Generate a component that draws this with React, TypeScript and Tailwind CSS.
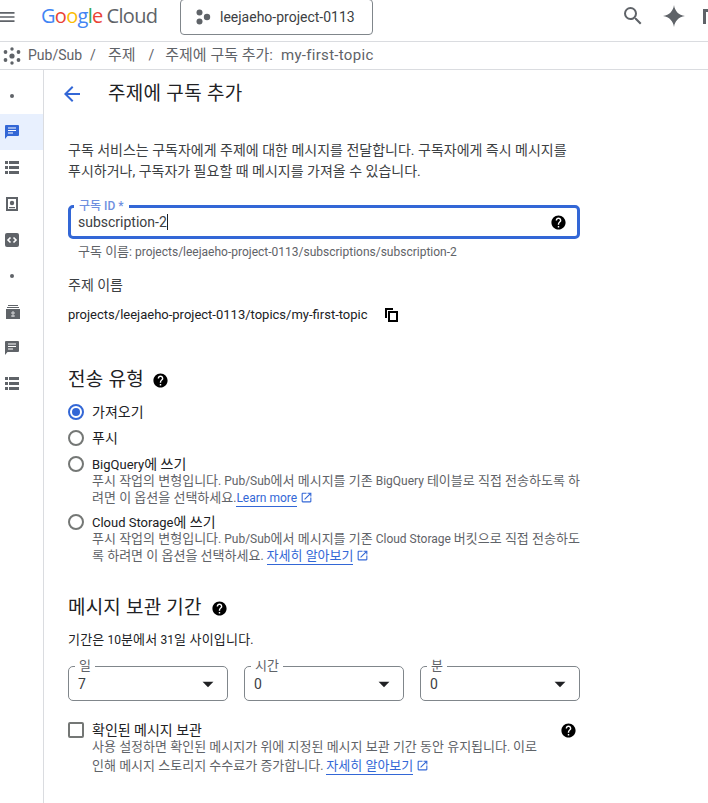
import React from 'react'
import { MdArrowBack, MdArrowDropDown, MdHelp, MdMenu, MdOpenInNew, MdSearch } from 'react-icons/md'

const FONT = "font-['Roboto','Noto_Sans_CJK_KR',sans-serif]"

// hangul runs are set a bit larger than the latin around them
const Ko = ({ text, className }: { text: string; className: string }) => (
  <>
    {text.split(/([가-힣]+(?:\s+[가-힣]+)*)/).map((part, i) =>
      /[가-힣]/.test(part) ? <span key={i} className={className}>{part}</span> : part
    )}
  </>
)

const KO_BODY = 'text-[14px]'
const KO_SMALL = 'text-[13px]'

const PubSubIcon = () => (
  <svg width="20" height="20" viewBox="0 0 20 20" className="text-[#5f6368]" fill="currentColor">
    <circle cx="10" cy="10" r="2.6" />
    <circle cx="10" cy="3" r="1.7" />
    <circle cx="10" cy="17" r="1.7" />
    <circle cx="3.5" cy="6" r="1.9" />
    <circle cx="16.5" cy="6" r="1.9" />
    <circle cx="3.5" cy="14" r="1.9" />
    <circle cx="16.5" cy="14" r="1.9" />
  </svg>
)

const ProjectIcon = () => (
  <svg width="16" height="20" viewBox="0 0 16 20" fill="#5f6368">
    <circle cx="4.5" cy="5.5" r="3" />
    <circle cx="4.5" cy="14.5" r="3" />
    <circle cx="12" cy="10" r="3.2" />
  </svg>
)

const SparkIcon = () => (
  <svg width="24" height="24" viewBox="0 0 24 24" fill="#5f6368">
    <path d="M12 1c.8 6 4.500 10 11 11-6.500 1-10.200 5-11 11-.8-6-4.500-10-11-11 6.500-1 10.200-5 11-11z" />
  </svg>
)

const CopyIcon = () => (
  <svg width="13" height="14" viewBox="0 0 13 14" fill="none" stroke="#000" strokeWidth="2" className="ml-[17px]">
    <path d="M1 10V1h7" />
    <rect x="4" y="4" width="8" height="9" />
  </svg>
)

const ChatIcon = ({ active }: { active?: boolean }) => (
  <svg width="14" height="14" viewBox="0 0 14 14">
    <path d="M1 0h12a1 1 0 0 1 1 1v9a1 1 0 0 1-1 1H2.500L0 14V1a1 1 0 0 1 1-1z" fill={active ? '#3367d6' : '#5f6368'} />
    <path d="M3 3h8M3 5.500h8M3 8h5" stroke="#fff" strokeWidth="1" />
  </svg>
)

const ListIcon = () => (
  <svg width="14" height="14" viewBox="0 0 14 14" fill="#5f6368">
    <rect x="0" y="0" width="3" height="3" />
    <rect x="4" y="0" width="10" height="3" />
    <rect x="0" y="5" width="3" height="3" />
    <rect x="4" y="5" width="10" height="3" />
    <rect x="0" y="10" width="3" height="3" />
    <rect x="4" y="10" width="10" height="3" />
  </svg>
)

const DocIcon = () => (
  <svg width="14" height="14" viewBox="0 0 14 14">
    <rect x="1" y="0" width="12" height="14" fill="#5f6368" />
    <rect x="3" y="2" width="8" height="10" fill="#fff" />
    <circle cx="7" cy="6" r="2.200" fill="#5f6368" />
    <rect x="4" y="10" width="6" height="1.200" fill="#5f6368" />
  </svg>
)

const CodeIcon = () => (
  <svg width="14" height="14" viewBox="0 0 14 14">
    <rect x="0" y="0" width="14" height="14" rx="2" fill="#5f6368" />
    <path d="M5.500 4.500 3 7l2.500 2.500M8.500 4.500 11 7 8.500 9.500" stroke="#fff" strokeWidth="1.600" fill="none" />
  </svg>
)

const ArchiveIcon = () => (
  <svg width="16" height="14" viewBox="0 0 16 14">
    <path d="M3 0h10v1H3zM2 2h12v1H2z" fill="#5f6368" />
    <path d="M1 4h14l0 10H1z" fill="#5f6368" />
    <path d="M8 6v6M6 8h4M6 11h4" stroke="#d5d6d8" strokeWidth="1" />
  </svg>
)

const SideItem = ({ active, children }: { active?: boolean; children?: React.ReactNode }) => (
  <div className={`h-9 flex items-center pl-[5px] ${active ? 'bg-[#e8f0fe]' : ''}`}>{children}</div>
)

const Dot = () => <div className="w-1 h-1 rounded-full bg-[#5f6368] ml-[5px]" />

const Radio = ({ checked }: { checked?: boolean }) => (
  <div className={`w-4 h-4 rounded-full border-2 shrink-0 flex items-center justify-center ${checked ? 'border-[#3367d6]' : 'border-[#747775]'}`}>
    {checked && <div className="w-2 h-2 rounded-full bg-[#3367d6]" />}
  </div>
)

const LearnLink = ({ children }: { children: React.ReactNode }) => (
  <span className="text-[#3367d6] whitespace-nowrap">
    <span className="border-b border-[#3367d6] pb-[1px]">{children}</span>
    <MdOpenInNew size={13} className="inline ml-[3px] align-[-2px]" />
  </span>
)

const Dropdown = ({ label, value }: { label: string; value: string }) => (
  <div className="relative flex-1 h-[35px] border border-[#80868b] rounded-[5px] flex items-center justify-between pl-[9px] pr-[6px]">
    <span className="absolute -top-[9px] left-[6px] bg-white px-[4px] text-[13px] leading-[16px] text-[#5f6368]">{label}</span>
    <span className="text-[14px] text-[#3c4043] mt-[1px]">{value}</span>
    <MdArrowDropDown size={26} className="text-[#202124]" />
  </div>
)

export default function App() {
  return (
    <div className={`${FONT} w-[708px] h-[803px] overflow-hidden bg-white text-[#202124]`}>
      {/* top bar */}
      <div className="h-[42px] flex items-start border-b border-[#dadce0]">
        <MdMenu size={20} className="text-[#5f6368] -ml-[3px] mt-[7px] shrink-0" />
        <div className="w-[139px] ml-[24px] mt-[2px] text-[20px] leading-[28px] tracking-[-0.7px] font-['Open_Sans',sans-serif] whitespace-nowrap">
          <span className="text-[#4285f4]">G</span>
          <span className="text-[#ea4335]">o</span>
          <span className="text-[#fbbc05]">o</span>
          <span className="text-[#4285f4]">g</span>
          <span className="text-[#34a853]">l</span>
          <span className="text-[#ea4335]">e</span>
          <span className="text-[#5f6368] ml-[4px]">Cloud</span>
        </div>
        <div className="-mt-[1px] w-[193px] h-[36px] border border-[#80868b] rounded-[4px] flex items-center pl-[14px] gap-[9px] text-[14px] shrink-0">
          <ProjectIcon />
          <span className="text-[#3c4043]">leejaeho-project-0113</span>
        </div>
        <MdSearch size={24} className="text-[#5f6368] ml-auto mt-[4px]" />
        <div className="ml-[17px] mt-[4px]"><SparkIcon /></div>
        <div className="w-[5px] h-[15px] mt-[9px] ml-[17px] border-l-[3px] border-t-[3px] border-[#5f6368]" />
      </div>

      {/* breadcrumb */}
      <div className="h-[28px] flex items-center border-b border-[#dadce0] pl-[2px] text-[14px] text-[#5f6368] whitespace-nowrap">
        <PubSubIcon />
        <span className="ml-[6px]">Pub/Sub</span>
        <span className="ml-[8px]">/</span>
        <span className="ml-[12px] text-[15px]">주제</span>
        <span className="ml-[13px]">/</span>
        <span className="ml-[11px] text-[15px]">주제에 구독 추가:</span>
        <span className="ml-[8px] text-[15px] tracking-[0.3px]">my-first-topic</span>
      </div>

      <div className="flex">
        {/* side rail */}
        <div className="w-[44px] h-[733px] border-r border-[#dadce0] pt-[8px] shrink-0">
          <SideItem><Dot /></SideItem>
          <SideItem active><ChatIcon active /></SideItem>
          <SideItem><ListIcon /></SideItem>
          <SideItem><DocIcon /></SideItem>
          <SideItem><CodeIcon /></SideItem>
          <SideItem><Dot /></SideItem>
          <SideItem><ArchiveIcon /></SideItem>
          <SideItem><ChatIcon /></SideItem>
          <SideItem><ListIcon /></SideItem>
        </div>

        {/* main */}
        <div className="flex-1 min-w-0">
          <div className="h-[46px] flex items-center pl-[16px]">
            <MdArrowBack size={24} className="text-[#3367d6] mt-[1px]" />
            <h1 className="ml-[24px] mt-[1px] text-[19px] tracking-[0.3px] font-normal leading-[24px] text-[#202124]">주제에 구독 추가</h1>
          </div>

          <div className="pl-[24px] w-[536px]">
            <p className="mt-[24px] text-[14px] leading-[21px] text-[#3c4043] w-[510px]">
              구독 서비스는 구독자에게 주제에 대한 메시지를 전달합니다. 구독자에게 즉시 메시지를 푸시하거나, 구독자가 필요할 때 메시지를 가져올 수 있습니다.
            </p>

            <div className="mt-[23px] relative h-[34px] border-[3px] border-[#3367d6] rounded-[5px] flex items-center justify-between pl-[7px] pr-[10px]">
              <span className="absolute -top-[10px] left-[3px] bg-white px-[5px] text-[12px] leading-[16px] font-medium text-[#6f8fdf]">구독 ID *</span>
              <span className="text-[14px] text-[#3c4043]">subscription-2<span className="inline-block w-[1px] h-[16px] bg-[#202124] align-[-3px]" /></span>
              <MdHelp size={17} className="text-black" />
            </div>
            <div className="mt-[5px] pl-[10px] text-[12px] leading-[16px] text-[#5f6368]"><Ko text="구독 이름: projects/leejaeho-project-0113/subscriptions/subscription-2" className={KO_SMALL} /></div>

            <div className="mt-[16px] text-[14px] leading-[18px] text-[#3c4043]">주제 이름</div>
            <div className="mt-[12px] flex items-center text-[13px] leading-[18px] text-[#202124]">
              <span>projects/leejaeho-project-0113/topics/my-first-topic</span>
              <CopyIcon />
            </div>

            <div className="mt-[44px] flex items-center gap-[8px]">
              <h2 className="text-[19px] tracking-[0.3px] leading-[24px] font-normal text-[#202124]">전송 유형</h2>
              <MdHelp size={17} className="text-black" />
            </div>

            <div className="mt-[10px] flex items-center gap-[8px] h-[20px] text-[13px]"><Radio checked /><span className={KO_BODY}>가져오기</span></div>
            <div className="mt-[6px] flex items-center gap-[8px] h-[20px] text-[13px]"><Radio /><span className={KO_BODY}>푸시</span></div>

            <div className="mt-[6px] flex items-center gap-[8px] h-[20px] text-[13px]"><Radio /><span><Ko text="BigQuery에 쓰기" className={KO_BODY} /></span></div>
            <p className="ml-[24px] -mt-[1px] text-[12px] leading-[16.500px] text-[#5f6368] w-[490px]">
              <Ko text="푸시 작업의 변형입니다. Pub/Sub에서 메시지를 기존 BigQuery 테이블로 직접 전송하도록 하려면 이 옵션을 선택하세요." className={KO_SMALL} /><LearnLink>Learn more</LearnLink>
            </p>

            <div className="mt-[6px] flex items-center gap-[8px] h-[20px] text-[13px]"><Radio /><span><Ko text="Cloud Storage에 쓰기" className={KO_BODY} /></span></div>
            <p className="ml-[24px] -mt-[1px] text-[12px] leading-[16.500px] text-[#5f6368] w-[490px]">
              <Ko text="푸시 작업의 변형입니다. Pub/Sub에서 메시지를 기존 Cloud Storage 버킷으로 직접 전송하도록 하려면 이 옵션을 선택하세요. " className={KO_SMALL} /><LearnLink><span className={KO_SMALL}>자세히 알아보기</span></LearnLink>
            </p>

            <div className="mt-[32px] flex items-center gap-[9px]">
              <h2 className="text-[19px] tracking-[0.2px] leading-[24px] font-normal text-[#202124]">메시지 보관 기간</h2>
              <MdHelp size={17} className="text-black" />
            </div>
            <div className="mt-[11px] text-[12px] leading-[18px] text-[#202124]"><Ko text="기간은 10분에서 31일 사이입니다." className="text-[13px] tracking-[0.2px]" /></div>

            <div className="mt-[17px] flex gap-[16px]">
              <Dropdown label="일" value="7" />
              <Dropdown label="시간" value="0" />
              <Dropdown label="분" value="0" />
            </div>

            <div className="mt-[20px] flex items-center h-[18px]">
              <div className="w-4 h-4 border-2 border-[#747775] rounded-[2px] shrink-0" />
              <span className={`ml-[8px] ${KO_BODY}`}>확인된 메시지 보관</span>
              <MdHelp size={17} className="ml-auto mr-[3px] text-black" />
            </div>
            <p className="ml-[24px] -mt-[1px] text-[12px] leading-[17.500px] text-[#5f6368] w-[450px]">
              <Ko text="사용 설정하면 확인된 메시지가 위에 지정된 메시지 보관 기간 동안 유지됩니다. 이로 인해 메시지 스토리지 수수료가 증가합니다. " className={KO_SMALL} /><LearnLink><span className={KO_SMALL}>자세히 알아보기</span></LearnLink>
            </p>
          </div>
        </div>
      </div>
    </div>
  )
}
